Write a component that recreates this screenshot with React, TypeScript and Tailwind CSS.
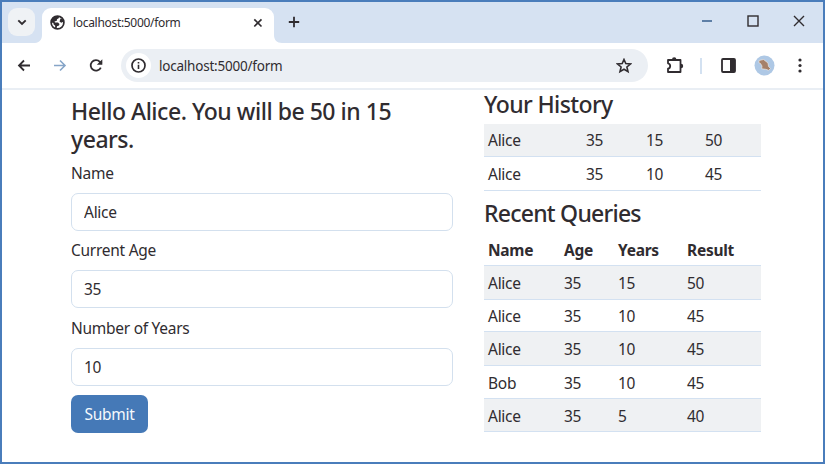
import React from "react";

const history = [
  { cells: ["Alice", "35", "15", "50"], style: "h-[33px] bg-[#eff1f3]" },
  { cells: ["Alice", "35", "10", "45"], style: "h-[34px] bg-white" },
];

const queries = [
  { cells: ["Alice", "35", "15", "50"], height: "h-[34px]" },
  { cells: ["Alice", "35", "10", "45"], height: "h-[32px]" },
  { cells: ["Alice", "35", "10", "45"], height: "h-[34px]" },
  { cells: ["Bob", "35", "10", "45"], height: "h-[33px]" },
  { cells: ["Alice", "35", "5", "40"], height: "h-[33px]" },
];

function TabStrip() {
  return (
    <div className="flex h-[41px] bg-[#d6e2f2]">
      <div className="ml-[6px] mt-[6px] flex h-[28px] w-[27px] items-center justify-center rounded-[9px] bg-[#eff2f5]">
        <svg width="10" height="7" viewBox="0 0 10 7" fill="none" stroke="#302c30" strokeWidth="1.9">
          <path d="M1.3 1.3 5 5l3.7-3.7" />
        </svg>
      </div>
      <svg className="mt-[33px] shrink-0" width="7" height="8" viewBox="0 0 7 8">
        <path d="M7 0v8H-1C4 8 7 5 7 0Z" fill="#fff" />
      </svg>
      <div className="mt-[6px] flex h-[35px] w-[232px] shrink-0 items-center rounded-t-[9px] bg-white pb-[6px]">
        <svg className="ml-[8px]" width="15" height="15" viewBox="0 0 15 15">
          <circle cx="7.5" cy="7.5" r="6.4" fill="#fff" stroke="#302c30" strokeWidth="1.7" />
          <path d="M1.5 4.5 4 1.5 8.5 1 9 3 7 4.2 6.8 5.8 4.5 6.5 5 7.5 8 7.6 9.5 9 9 10.5 7 11.3 6.6 13.5 5 13.2 5.2 10.8 3.5 9.3 3.4 8 1.2 7.5Z" fill="#302c30" />
          <path d="m10.5 3.5 2 .3 1 3-2.3 1-1.7-1.4Z" fill="#302c30" />
        </svg>
        <span className="ml-[8px] w-[107px] whitespace-nowrap text-[12px] leading-[16px] tracking-[-0.31px]">localhost:5000/form</span>
        <svg className="ml-[73px]" width="10" height="10" viewBox="0 0 10 10" stroke="#302c30" strokeWidth="1.7">
          <path d="m1.3 1.3 7.2 7.2m0-7.2L1.3 8.5" />
        </svg>
      </div>
      <svg className="mt-[33px] shrink-0" width="8" height="8" viewBox="0 0 8 8">
        <path d="M0 0v8h8C3 8 0 5 0 0Z" fill="#fff" />
      </svg>
      <svg className="ml-[6px] mt-[14px]" width="12" height="12" viewBox="0 0 12 12" stroke="#302c30" strokeWidth="1.8">
        <path d="M6 .8v10.4M.8 6h10.4" />
      </svg>
      <div className="ml-auto flex h-[38px] items-center gap-[34px] pr-[18px]">
        <svg width="12" height="12" viewBox="0 0 12 12" stroke="#2a5587" strokeWidth="1.4">
          <path d="M1 6h10" />
        </svg>
        <svg width="12" height="12" viewBox="0 0 12 12" fill="none" stroke="#302c30" strokeWidth="1.4">
          <rect x="1" y="1" width="10" height="10" />
        </svg>
        <svg width="12" height="12" viewBox="0 0 12 12" stroke="#302c30" strokeWidth="1.4">
          <path d="m1 1 10 10m0-10L1 11" />
        </svg>
      </div>
    </div>
  );
}

function Toolbar() {
  return (
    <div className="flex h-[47px] items-center border-b-2 border-[#e9eef4] bg-white">
      <svg className="ml-[15px]" width="14" height="14" viewBox="0 0 14 14" fill="none" stroke="#302c30" strokeWidth="1.8">
        <path d="M13 6.5H2m5-5-5 5 5 5" />
      </svg>
      <svg className="ml-[22px]" width="14" height="14" viewBox="0 0 14 14" fill="none" stroke="#86a5c8" strokeWidth="1.6">
        <path d="M1 6.5h11M7 1.5l5 5-5 5" />
      </svg>
      <svg className="ml-[22px]" width="14" height="14" viewBox="0 0 14 14">
        <path d="M11.8 8.6a5.3 5.3 0 1 1-.9-5.8L12.6 4.5" fill="none" stroke="#302c30" strokeWidth="1.8" />
        <path d="M13.3.3v5.5H7.8Z" fill="#302c30" />
      </svg>
      <div className="ml-[18px] flex h-[33px] w-[527px] items-center rounded-full bg-[#ebeff4] pl-[5px]">
        <div className="flex size-[25px] items-center justify-center rounded-full bg-white">
          <svg width="15" height="15" viewBox="0 0 15 15">
            <circle cx="7.5" cy="7.5" r="6.5" fill="none" stroke="#302c30" strokeWidth="1.7" />
            <path d="M6.7 6.7h1.6V11H6.7zM6.7 4h1.6v1.6H6.7z" fill="#302c30" />
          </svg>
        </div>
        <span className="ml-[8px] w-[124px] whitespace-nowrap text-[13.5px] leading-[18px] tracking-[-0.22px]">localhost:5000/form</span>
        <svg className="ml-auto mr-[16px]" width="16" height="16" viewBox="0 0 16 16" fill="none" stroke="#302c30" strokeWidth="1.6">
          <path d="m8 1.5 1.8 4.1 4.7.4L10.9 9l1.1 4.6L8 11.2l-4 2.4L5.1 9 1.5 6l4.7-.4Z" />
        </svg>
      </div>
      <svg className="mb-[2px] ml-[18px]" width="18" height="18" viewBox="0 0 18 18">
        <path d="M2 4h12.5V16H2v-3.3c1.5-.3 2.2-1.3 2.2-2.7S3.5 7.6 2 7.3Z" fill="none" stroke="#302c30" strokeWidth="1.8" strokeLinejoin="round" />
        <path d="M6 3.5a2.2 2.2 0 0 1 4.4 0ZM15 7.8a2.2 2.2 0 0 1 0 4.4Z" fill="#302c30" />
      </svg>
      <div className="ml-[16px] h-[16px] w-[2px] bg-[#d3e1f1]" />
      <svg className="ml-[19px]" width="15" height="15" viewBox="0 0 15 15">
        <rect x="1" y="1" width="13" height="13" rx="1" fill="none" stroke="#302c30" strokeWidth="1.8" />
        <path d="M9 1h5v13H9z" fill="#302c30" />
      </svg>
      <svg className="ml-[18px]" width="21" height="21" viewBox="0 0 21 21">
        <circle cx="10.5" cy="10.5" r="10" fill="#aec8e5" />
        <path d="m5 5.5 4.5-1 4.500 3.500.5 3.500 2 2-1.800 1.800-3-1-4-.5.300-2.800-1.500-2.500L5 7.900Z" fill="#a58069" stroke="#ece5df" strokeWidth=".7" />
      </svg>
      <svg className="ml-[23px]" width="4" height="15" viewBox="0 0 4 15" fill="#302c30">
        <circle cx="2" cy="2" r="1.6" />
        <circle cx="2" cy="7.5" r="1.6" />
        <circle cx="2" cy="13" r="1.6" />
      </svg>
    </div>
  );
}

function Field({ label, value, className }: { label: string; value: string; className: string }) {
  return (
    <label className={`block ${className}`}>
      <span className="block h-[32px] whitespace-nowrap leading-[24px]">{label}</span>
      <input
        className="block h-[38px] w-full rounded-[7px] border border-[#d3e0ee] bg-white px-[12px] leading-[24px] outline-none"
        defaultValue={value}
      />
    </label>
  );
}

export default function App() {
  return (
    <div className="flex h-[464px] w-[825px] flex-col overflow-hidden border-2 border-[#4a7dbb] bg-white font-['Noto_Sans','Open_Sans',sans-serif] text-[15.5px] tracking-[-0.27px] text-[#302c30]">
      <TabStrip />
      <Toolbar />
      <main className="flex">
        <form className="ml-[69px] mt-[7px] w-[382px]">
          <h4 className="mb-[8px] w-[340px] text-[23px] font-medium leading-[28px] tracking-[-0.47px]">
            Hello Alice. You will be 50 in 15 years.
          </h4>
          <Field label="Name" value="Alice" className="h-[77px]" />
          <Field label="Current Age" value="35" className="h-[78px]" />
          <Field label="Number of Years" value="10" className="h-[78px]" />
          <button type="button" className="mt-[0.5px] h-[38px] w-[77px] rounded-[7px] bg-[#4579b7] leading-[24px] text-[#f5f9fd]">Submit</button>
        </form>
        <section className="ml-[31px] w-[277px]">
          <h4 className="h-[34px] text-[23px] font-medium leading-[28px] tracking-[-0.6px]">Your History</h4>
          {history.map((row, i) => (
            <div key={i} className={`grid grid-cols-[98px_60px_59px_1fr] items-center border-b border-[#d3e1f1] pl-[4px] pt-[2px] ${row.style}`}>
              {row.cells.map((cell, j) => <span key={j}>{cell}</span>)}
            </div>
          ))}
          <h4 className="mt-[8px] h-[35px] text-[23px] font-medium leading-[28px] tracking-[-0.76px]">Recent Queries</h4>
          <div className="grid h-[32px] grid-cols-[76px_54px_69px_1fr] items-center border-b border-[#d3e1f1] pl-[4px] pt-[3px] font-bold">
            <span>Name</span>
            <span>Age</span>
            <span>Years</span>
            <span>Result</span>
          </div>
          {queries.map((row, i) => (
            <div key={i} className={`grid grid-cols-[76px_54px_69px_1fr] items-center border-b border-[#d3e1f1] pl-[4px] pt-[3px] ${row.height} ${i % 2 ? "" : "bg-[#eff1f3]"}`}>
              {row.cells.map((cell, j) => <span key={j}>{cell}</span>)}
            </div>
          ))}
        </section>
      </main>
    </div>
  );
}
